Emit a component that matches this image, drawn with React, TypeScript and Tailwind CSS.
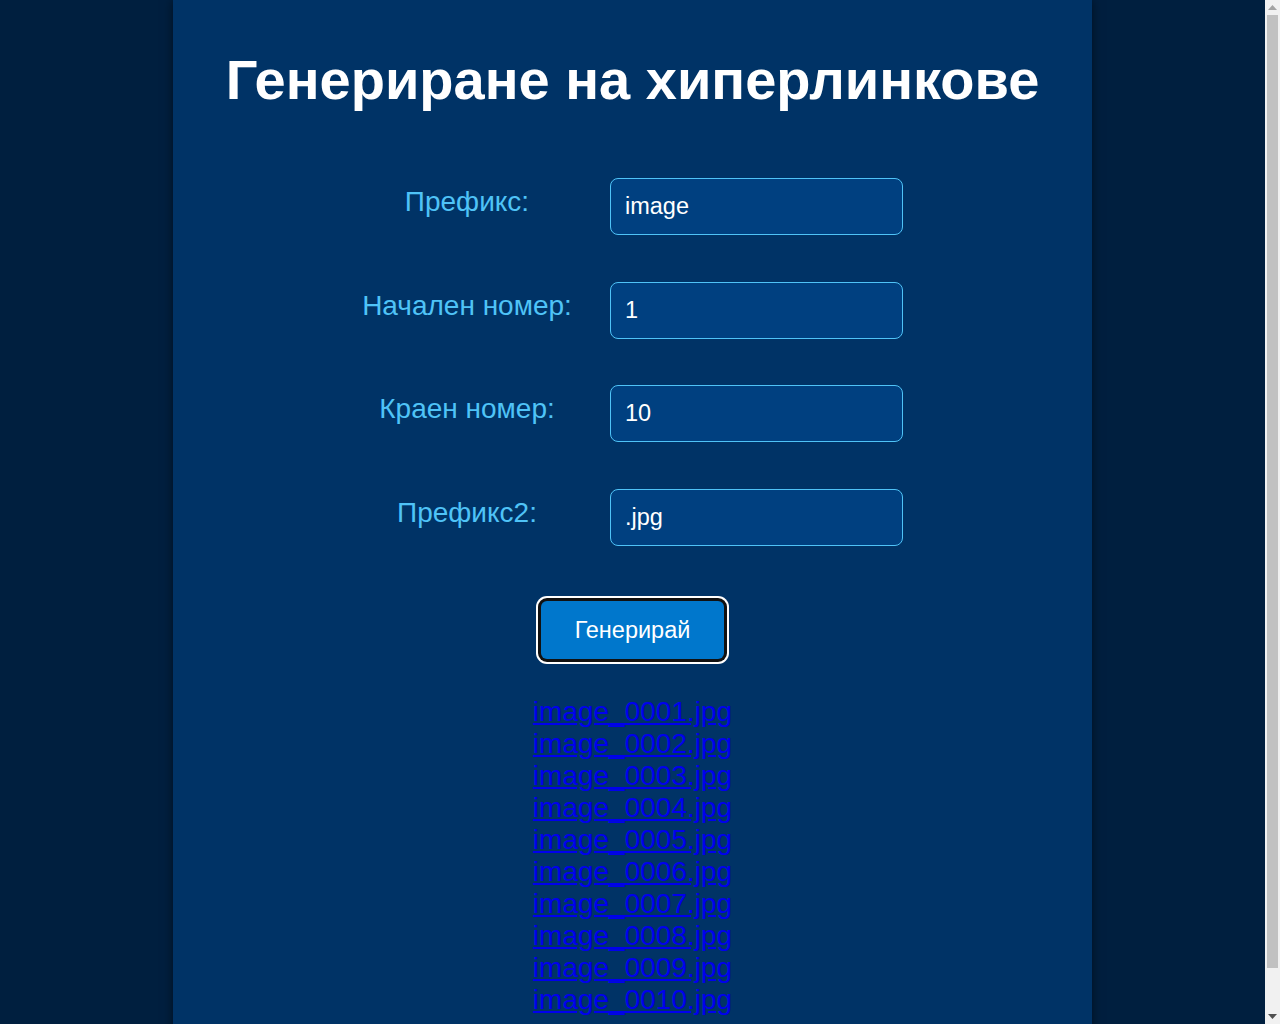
import React from 'react';

const fields = [
  { label: 'Префикс:', value: 'image' },
  { label: 'Начален номер:', value: '1' },
  { label: 'Краен номер:', value: '10' },
  { label: 'Префикс2:', value: '.jpg' },
];

const links = Array.from({ length: 10 }, (_, i) => `image_${String(i + 1).padStart(4, '0')}.jpg`);

function Scrollbar() {
  return (
    <div className="flex h-screen w-[15px] shrink-0 flex-col items-center bg-[#f1f1f1]">
      <div className="flex h-[15px] w-full items-center justify-center">
        <svg width="9" height="5" viewBox="0 0 9 5">
          <path d="M0 5 L4.5 0 L9 5 Z" fill="#a3a3a3" />
        </svg>
      </div>
      <div className="flex-1 w-full px-[2px]">
        <div className="h-[953px] w-full bg-[#c1c1c1]" />
      </div>
      <div className="flex h-[15px] w-full items-center justify-center">
        <svg width="9" height="5" viewBox="0 0 9 5">
          <path d="M0 0 L9 0 L4.5 5 Z" fill="#505050" />
        </svg>
      </div>
    </div>
  );
}

export default function App() {
  return (
    <div className="flex h-screen bg-[#001f3f] font-['Liberation_Sans',Arial,sans-serif] leading-[normal]">
      <div className="flex-1 overflow-hidden">
        <div className="mx-auto w-[919px] bg-[#003366] pt-[47px] pb-[50px] shadow-[0_0_10px_rgba(0,0,0,0.5)]">
          {/* Title */}
          <h1 className="text-center text-[56px] font-bold text-white">Генериране на хиперлинкове</h1>

          {/* Form */}
          <div className="ml-[174px] mt-[66px] grid w-[556px] grid-cols-[240px_293px] gap-x-[23px] gap-y-[46.7px]">
            {fields.map((f) => (
              <React.Fragment key={f.label}>
                <label className="pt-[8px] text-center text-[28px] text-[#4fc3f7]">{f.label}</label>
                <input
                  readOnly
                  value={f.value}
                  className="h-[57px] w-[293px] rounded-lg border border-[#4fc3f7] bg-[#004080] pl-[14px] text-[23.5px] text-white outline-none"
                />
              </React.Fragment>
            ))}
          </div>

          {/* Button */}
          <div className="mt-[55px] flex justify-center">
            <button className="h-[58px] w-[183px] rounded-md bg-[#0077cc] text-[23.5px] text-white shadow-[0_0_0_3px_#111111,0_0_0_5px_#ffffff]">
              Генерирай
            </button>
          </div>

          {/* Links */}
          <div className="mt-[37px] flex flex-col items-center">
            {links.map((l) => (
              <a key={l} href="#" className="text-[28px] text-[#0000ee] underline">
                {l}
              </a>
            ))}
          </div>
        </div>
      </div>
      <Scrollbar />
    </div>
  );
}
